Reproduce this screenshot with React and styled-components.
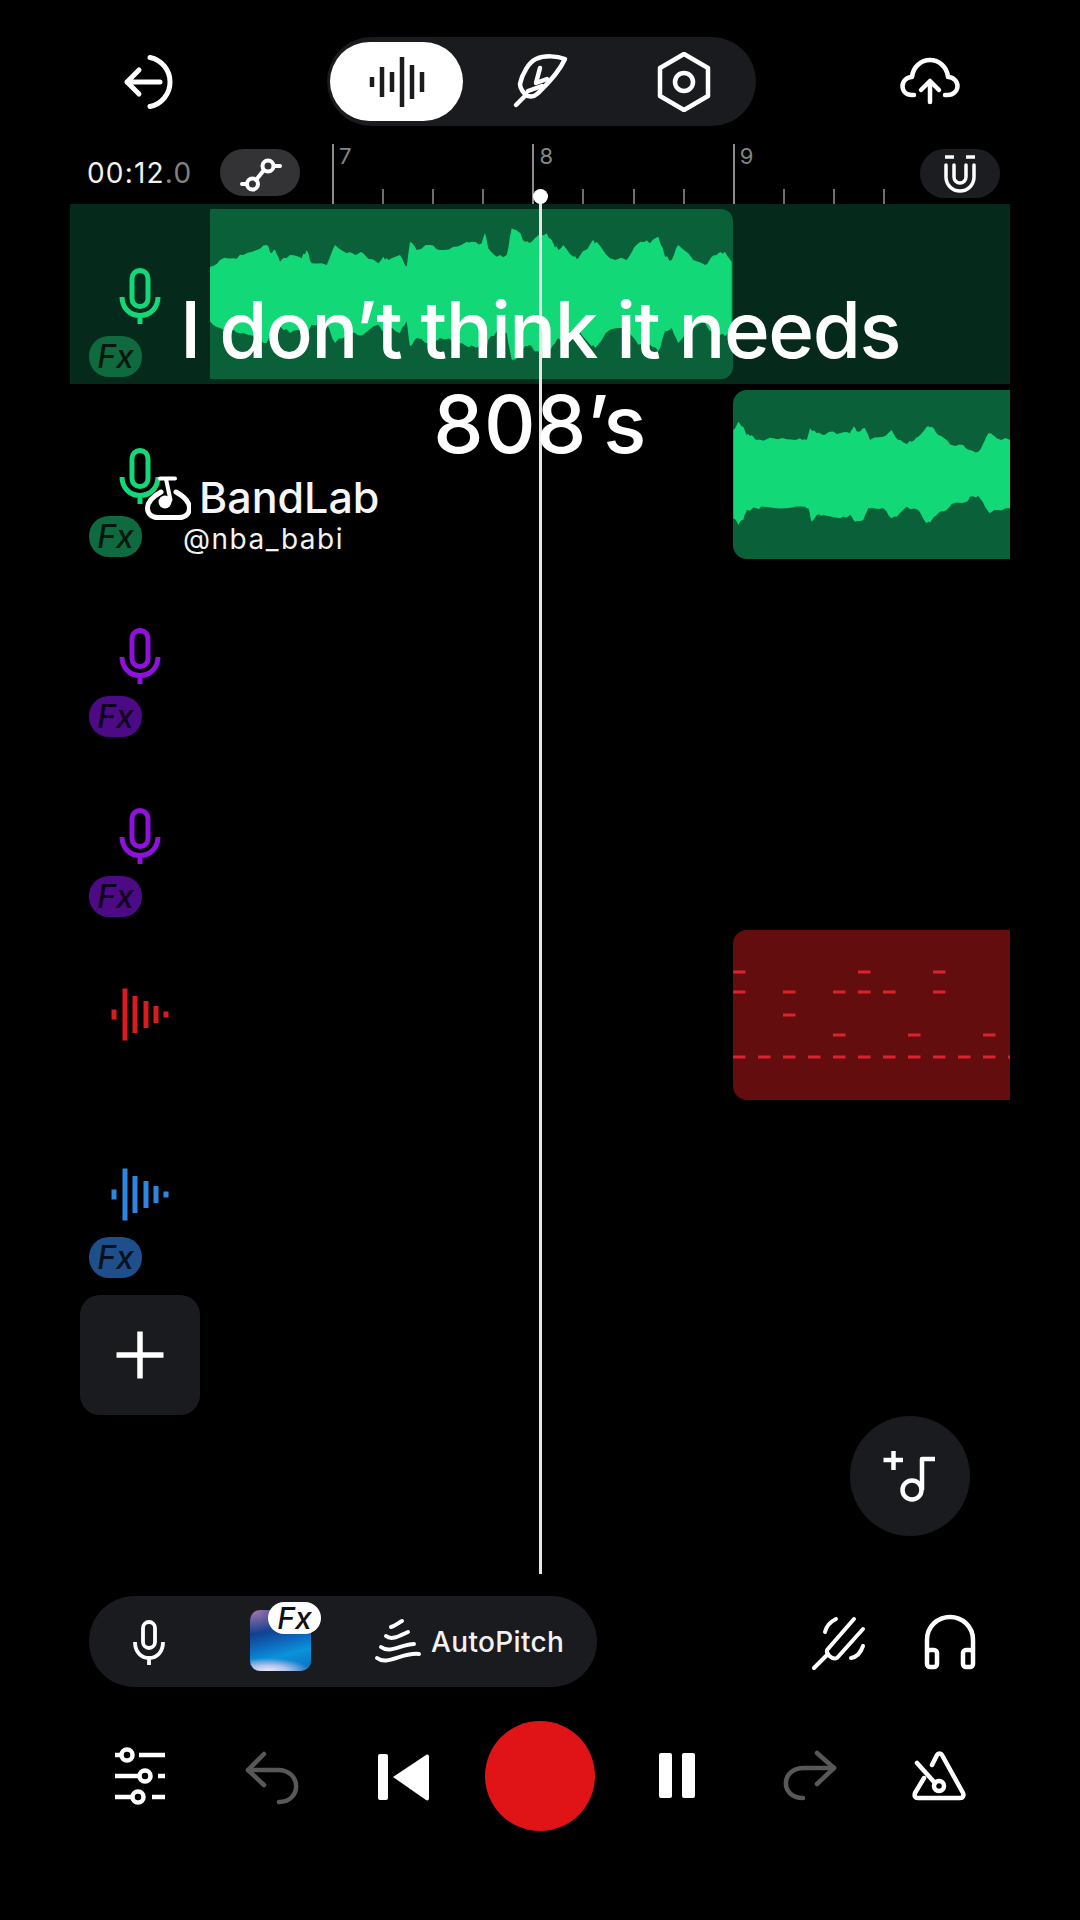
import React from "react";
import styled, { createGlobalStyle } from "styled-components";

const Global = createGlobalStyle`
  html, body { margin: 0; padding: 0; background: #000; }
  * { box-sizing: border-box; }
`;

const UI = `"Inter", "Liberation Sans", sans-serif`;

const Page = styled.div`
  position: relative;
  width: 1080px;
  height: 1920px;
  background: #000;
  overflow: hidden;
  font-family: ${UI};
  color: #fff;
`;

const Glyph = styled.svg`
  display: block;
  flex: none;
  fill: none;
  stroke: ${(p) => p.$color || "#fff"};
  stroke-width: ${(p) => p.$weight || 4.5}px;
  stroke-linecap: round;
  stroke-linejoin: round;
`;

const Icon = ({ box, size = 60, color, weight, children }) => (
  <Glyph
    viewBox={`${box[0]} ${box[1]} ${size} ${size}`}
    width={size}
    height={size}
    $color={color}
    $weight={weight}
  >
    {children}
  </Glyph>
);

/* Header */
const Header = styled.header`
  display: flex;
  align-items: center;
  justify-content: space-between;
  height: 126px;
  padding: 37px 120px 0;
`;
const ModePill = styled.nav`
  display: flex;
  align-items: center;
  width: 429px;
  height: 89px;
  margin-left: 3px;
  padding-left: 3px;
  border-radius: 45px;
  background: #1a1b1f;
`;
const ModeTab = styled.div`
  display: flex;
  align-items: center;
  justify-content: center;
  width: ${(p) => p.$w}px;
  height: 79px;
  border-radius: 40px;
  background: ${(p) => (p.$active ? "#fff" : "transparent")};
`;

/* Time row */
const TimeRow = styled.div`
  display: flex;
  align-items: flex-start;
  height: 60px;
  margin-top: 18px;
  padding-left: 87px;
`;
const TimeText = styled.div`
  width: 133px;
  padding-top: 12px;
  font-size: 28px;
  line-height: 34px;
  letter-spacing: 1.2px;
  color: #f2f2f2;
`;
const TimeFrac = styled.span`
  color: #808080;
`;
const SmallPill = styled.div`
  display: flex;
  align-items: center;
  justify-content: center;
  flex: none;
  width: 80px;
  height: ${(p) => p.$h}px;
  margin-top: 5px;
  border-radius: 25px;
  background: ${(p) => p.$bg};
`;
const Ruler = styled.div`
  display: flex;
  align-items: flex-end;
  width: 588px;
  height: 60px;
  margin-left: 32px;
`;
const Tick = styled.div`
  position: relative;
  flex: 0 0 50.1px;
  height: ${(p) => (p.$major ? 60 : 15)}px;
  border-left: 2px solid ${(p) => (p.$major ? "#8c8c8c" : "#6e6e6e")};
`;
const TickLabel = styled.span`
  position: absolute;
  left: 5px;
  top: -1px;
  font-size: 22px;
  line-height: 26px;
  color: #858585;
`;

/* Tracks */
const Tracks = styled.section`
  margin: 0 70px;
`;
const Track = styled.div`
  display: grid;
  grid-template-columns: 140px 800px;
  height: 180px;
  background: ${(p) => (p.$selected ? "#05291b" : "transparent")};
  overflow: hidden;
`;
const TrackHead = styled.div`
  display: flex;
  flex-direction: column;
  align-items: center;
  height: 180px;
  padding-top: ${(p) => p.$pad}px;
`;
const FxBadge = styled.div`
  align-self: flex-start;
  display: flex;
  align-items: center;
  justify-content: center;
  width: 53px;
  height: 41px;
  margin-top: ${(p) => p.$gap}px;
  margin-left: 19px;
  border-radius: 20px;
  background: ${(p) => p.$bg};
  color: rgba(0, 0, 0, 0.78);
  font-size: 32px;
  font-style: italic;
  font-weight: 500;
  line-height: 1;
`;
const Lane = styled.div`
  display: flex;
  align-items: flex-start;
  padding-top: ${(p) => p.$top}px;
  padding-left: ${(p) => p.$left}px;
`;
const Clip = styled.div`
  flex: none;
  width: ${(p) => p.$w}px;
  height: ${(p) => p.$h}px;
  background: ${(p) => p.$bg};
  border-radius: ${(p) => p.$radius};
  overflow: hidden;
`;
const ClipArt = styled.svg`
  display: block;
  width: 100%;
  height: 100%;
`;

/* Lower area */
const Lower = styled.div`
  display: flex;
  align-items: flex-start;
  justify-content: space-between;
  height: 312px;
  padding: 11px 110px 0 80px;
`;
const AddTrack = styled.div`
  display: flex;
  align-items: center;
  justify-content: center;
  width: 120px;
  height: 120px;
  border-radius: 20px;
  background: #1a1b1e;
`;
const AddNote = styled.div`
  display: flex;
  align-items: center;
  justify-content: center;
  width: 120px;
  height: 120px;
  margin-top: 121px;
  border-radius: 50%;
  background: #1a1b1e;
`;

/* Tool row */
const ToolRow = styled.div`
  display: flex;
  align-items: center;
  height: 91px;
  padding-left: 89px;
`;
const ToolPill = styled.div`
  display: flex;
  align-items: center;
  flex: none;
  width: 508px;
  height: 91px;
  padding-left: 30px;
  border-radius: 46px;
  background: #1a1b1f;
`;
const EffectThumb = styled.div`
  position: relative;
  flex: none;
  width: 61px;
  height: 61px;
  margin-left: 71px;
  margin-top: -3px;
  border-radius: 10px;
  background:
    radial-gradient(42px 13px at 30% 100%, #ece8f8 0%, #b4c2ea 45%, rgba(120, 170, 230, 0) 100%),
    radial-gradient(36px 24px at 6% 0%, #a878b0 0%, #5a5aa0 50%, rgba(30, 60, 130, 0) 100%),
    linear-gradient(165deg, #1d3f8f 0%, #123f8e 32%, #0d6fc4 55%, #0a93d8 70%, #0c6cc4 100%);
`;
const ThumbBadge = styled.div`
  position: absolute;
  left: 18px;
  top: -8px;
  display: flex;
  align-items: center;
  justify-content: center;
  width: 53px;
  height: 32px;
  border-radius: 16px;
  background: #fff;
  color: #111;
  font-size: 30px;
  font-style: italic;
  font-weight: 500;
  line-height: 1;
`;
const PitchLabel = styled.div`
  margin-left: 9px;
  font-size: 28px;
  font-weight: 500;
  line-height: 1;
  color: #f2f2f2;
  letter-spacing: 0.35px;
`;
const RowIcon = styled.div`
  flex: none;
  margin-left: ${(p) => p.$gap}px;
`;
const ThumbGap = styled.div`
  flex: none;
  margin-left: 61px;
`;

/* Transport */
const Transport = styled.footer`
  display: grid;
  grid-template-columns: 132px 132px 132px 140px 134px 130px 130px;
  align-items: center;
  height: 110px;
  margin-top: 34px;
  padding-left: 74px;
`;
const Cell = styled.div`
  display: flex;
  align-items: center;
  justify-content: center;
`;
const RecordButton = styled.div`
  width: 110px;
  height: 110px;
  border-radius: 50%;
  background: #e01417;
`;

/* Overlays */
const Playhead = styled.div`
  position: absolute;
  left: 538.5px;
  top: 196px;
  width: 3px;
  height: 1378px;
  background: #e6e6e6;
  &::before {
    content: "";
    position: absolute;
    left: -6px;
    top: -7px;
    width: 15px;
    height: 15px;
    border-radius: 50%;
    background: #fff;
  }
`;
const Caption = styled.div`
  position: absolute;
  left: 0;
  right: 0;
  top: 283px;
  text-align: center;
  font-weight: 500;
  line-height: 94px;
  color: #fff;
`;
const CaptionLine = styled.div`
  font-size: ${(p) => p.$size}px;
  letter-spacing: ${(p) => p.$track}px;
`;
const Watermark = styled.div`
  position: absolute;
  left: 145px;
  top: 472px;
  display: grid;
  grid-template-columns: 46px auto;
  column-gap: 8px;
  align-items: center;
`;
const BrandName = styled.div`
  font-size: 43px;
  font-weight: 500;
  line-height: 50px;
  color: #f6f6f6;
`;
const Handle = styled.div`
  grid-column: 1 / 3;
  padding-left: 38px;
  padding-top: 2px;
  font-size: 28px;
  line-height: 30px;
  letter-spacing: 1.5px;
  color: #f2f2f2;
`;

/* Data */
const a = (x, y) => [70 + x / 3, 200 + y / 3];
const b = (x, y) => [530 + x / 3, 200 + y / 3];

// fills the hand-read envelope with the fine jitter of a real wave form
const roughen = (list, steps, amp, seed) => {
  const out = [];
  let s = seed;
  const rnd = () => {
    s = (s * 9301 + 49297) % 233280;
    return s / 233280 - 0.5;
  };
  list.forEach((p, i) => {
    const q = list[i + 1];
    out.push(p);
    if (!q) return;
    for (let k = 1; k < steps; k++) {
      const t = k / steps;
      out.push([p[0] + (q[0] - p[0]) * t, p[1] + (q[1] - p[1]) * t + rnd() * amp]);
    }
  });
  return out;
};

const firstEnvelope = [
  [420,200],[450,180],[490,175],[520,165],[560,150],[590,135],[605,160],[615,150],[630,185],[660,165],[695,175],[710,150],[725,190],[770,195],[795,135],[830,160],[855,165],[880,160],[925,190],[940,170],[955,180],[990,165],[1010,200],[1020,125],[1040,150],[1080,135],[1110,150],[1150,140],[1190,125],[1210,125],[1235,130],[1245,100],[1255,145],[1280,170],[1310,165],[1325,85],[1345,95],[1365,125],[1385,125],
].map(([x, y]) => a(x, y)).concat(
  [[20,110],[50,100],[70,130],[85,150],[100,135],[130,170],[145,175],[185,125],[200,125],[240,175],[290,180],[325,130],[345,125],[360,130],[385,110],[405,170],[425,180],[445,135],[490,180],[525,195],[545,170],[565,160],[585,155],[605,185]].map(([x, y]) => b(x, y))
);
const firstTop = roughen(firstEnvelope, 3, 4, 17);
const firstBottom = roughen(firstEnvelope.map(([x, y]) => [x, 588 - y]), 3, 4, 91).reverse();
const secondTop = roughen([
  [610,690],[625,665],[640,680],[650,705],[665,705],[680,720],[700,722],[730,715],[770,718],[810,715],[830,720],[840,685],[860,700],[880,705],[900,695],[930,700],[960,700],[970,680],[985,695],[1005,685],[1020,720],[1060,710],[1085,690],[1105,720],[1125,730],[1145,725],[1165,710],[1190,680],[1205,680],[1225,705],[1250,720],[1265,735],[1300,735],[1320,750],[1345,755],[1365,720],[1375,700],[1400,715],[1440,720],
].map(([x, y]) => b(x, y)), 3, 3, 43);
const secondBottom = roughen([
  [610,955],[625,975],[640,960],[650,930],[680,925],[700,920],[770,925],[820,920],[835,925],[845,965],[860,945],[880,945],[930,955],[960,945],[975,965],[1000,960],[1015,925],[1060,925],[1085,955],[1100,950],[1130,920],[1165,930],[1190,970],[1205,960],[1225,940],[1250,930],[1265,912],[1310,905],[1320,890],[1345,888],[1365,920],[1380,940],[1400,930],[1440,925],
].map(([x, y]) => b(x, y)), 3, 3, 71).reverse();
const toPoints = (l) => l.map((p) => p.map((n) => n.toFixed(1)).join(",")).join(" ");

const notes = [
  [42, [0, 5, 8]],
  [62, [0, 2, 4, 5, 6, 8]],
  [85, [2]],
  [105, [4, 7, 10]],
  [127, [0, 1, 2, 3, 4, 5, 6, 7, 8, 9, 10, 11]],
];

const WAVE_BARS = [[114, 10], [125, 52], [135, 37], [146, 27], [156, 17], [166, 6]];
const MODE_BARS = [[372, 10], [382, 30], [392, 20], [402, 50], [412, 34], [422, 20]];

const ticks = [7, 0, 0, 0, 8, 0, 0, 0, 9, 0, 0, 0];

/* Icons */
const BackIcon = () => (
  <Icon box={[120, 51]} weight={5}>
    <path d="M160 81H127M139 69L127 81L139 93" />
    <path d="M150 56.500A25 25 0 0 1 150 105.500" />
  </Icon>
);
const ModeWaveIcon = () => (
  <Icon box={[367, 51]} color="#1b1b1d" weight={4.5}>
    {MODE_BARS.map(([x, h]) => (
      <line key={x} x1={x} x2={x} y1={81 - h / 2} y2={81 + h / 2} strokeLinecap="butt" />
    ))}
  </Icon>
);
const FeatherIcon = () => (
  <Icon box={[510, 51]} weight={4.5}>
    <path d="M565 58C557 55 545 54 536 58C529 61 522 73 520 83C520 88 524 93 528 95C532 96 535 95 537 93C544 86 557 75 565 58Z" />
    <path d="M516 104L526 94M540 67L536 82L547 78M528 90L542 85" />
  </Icon>
);
const HexIcon = () => (
  <Icon box={[654, 51]}>
    <path d="M684 53L708 67V95L684 109L660 95V67Z" />
    <circle cx="684" cy="81" r="9" />
  </Icon>
);
const CloudIcon = () => (
  <Icon box={[900, 51]}>
    <path d="M914 94H912C906 94 902.500 90 902.500 85C902.500 80 907 76 912 76C913 66 921 59 930 59C939 59 947 66 948 76C953 76 957.500 80 957.500 85C957.500 90 953 94 948 94H945" />
    <path d="M930 101V81M921 89L930 80L939 89" />
  </Icon>
);
const AutomationIcon = () => (
  <Icon box={[230, 142]} weight={4}>
    <circle cx="252.500" cy="183" r="5.500" />
    <circle cx="268" cy="165" r="5.500" />
    <path d="M242 183H247M256 179L264 169M274 165H280" />
  </Icon>
);
const MagnetIcon = () => (
  <Icon box={[931, 145]} weight={3.5}>
    <path d="M947 166V178A14 14 0 0 0 975 178V166" />
    <path d="M955 166V178A6 6 0 0 0 967 178V166" />
    <path d="M946 158H955M967 158H976" strokeLinecap="butt" />
  </Icon>
);
const MicBox = styled.div`
  width: 44px;
  height: 60px;
`;
const TrackMic = ({ color }) => (
  <MicBox>
    <Glyph viewBox="118 264 44 60" width="44" height="60" $color={color} $weight={5}>
      <rect x="132" y="268.500" width="16" height="36" rx="8" />
      <path d="M122 295C122 306 130 313.500 140 313.500C150 313.500 158 306 158 295M140 313.500V322" strokeLinecap="butt" />
    </Glyph>
  </MicBox>
);
const TrackWave = ({ color }) => (
  <Glyph viewBox="110 988 60 54" width="60" height="54" $color={color} $weight={5}>
    {WAVE_BARS.map(([x, h]) => (
      <line key={x} x1={x} x2={x} y1={1014.5 - h / 2} y2={1014.5 + h / 2} strokeLinecap="butt" />
    ))}
  </Glyph>
);
const PlusIcon = () => (
  <Icon box={[110, 1325]} weight={5.5}>
    <path d="M116.500 1355H163.500M140 1331.500V1378.500" strokeLinecap="butt" />
  </Icon>
);
const AddNoteIcon = () => (
  <Icon box={[880, 1446]}>
    <path d="M883.500 1460H903M893.500 1451V1470" strokeLinecap="butt" />
    <circle cx="912" cy="1490" r="9.500" />
    <path d="M922 1490V1459H935" strokeLinecap="butt" />
  </Icon>
);
const ToolMic = () => (
  <Glyph viewBox="119 1611 60 60" width="60" height="60" $weight={3.8}>
    <rect x="143" y="1621" width="12" height="26" rx="6" />
    <path d="M135 1641C135 1651 141 1657 149 1657C157 1657 163 1651 163 1641M149 1657V1664" strokeLinecap="butt" />
  </Glyph>
);
const PitchIcon = () => (
  <Glyph viewBox="370 1612 50 56" width="50" height="56" $weight={4}>
    <path d="M389 1625C393 1624 396 1621 400 1619" />
    <path d="M384 1634C390 1639 399 1633 406 1630" />
    <path d="M379 1645C388 1652 400 1642 412 1642" />
    <path d="M375 1656C385 1664 400 1650 417 1652" />
  </Glyph>
);
const ForkIcon = () => (
  <Icon box={[810, 1610]} weight={4}>
    <path d="M814 1666L828 1652" />
    <path d="M854 1617L827 1648C826 1652 832 1658 837 1656L863 1627" />
    <path d="M825 1630C826 1625 830 1620 836 1617M851 1656C857 1655 861 1650 863 1644" />
  </Icon>
);
const HeadphoneIcon = () => (
  <Icon box={[920, 1610]}>
    <path d="M927 1650V1638C927 1624 938 1615 950 1615C962 1615 973 1624 973 1638V1650" />
    <rect x="927" y="1648" width="10" height="17" rx="3" />
    <rect x="963" y="1648" width="10" height="17" rx="3" />
  </Icon>
);
const SlidersIcon = () => (
  <Icon box={[110, 1747]}>
    <path d="M115 1756H120M139 1756H165M115 1777H138M158 1777H165M115 1798H131M152 1798H165" strokeLinecap="butt" />
    <circle cx="127" cy="1756" r="5.500" />
    <circle cx="145" cy="1777" r="5.500" />
    <circle cx="138" cy="1798" r="5.500" />
  </Icon>
);
const UndoIcon = () => (
  <Icon box={[242, 1747]} color="#585858">
    <path d="M264 1755L248 1771L264 1786" />
    <path d="M248 1771H278C302 1771 302 1803 279 1803" />
  </Icon>
);
const RedoIcon = () => (
  <Icon box={[779, 1747]} color="#585858">
    <path d="M817 1754L834 1769L817 1785" />
    <path d="M834 1769H804C780 1769 780 1799 803 1799" />
  </Icon>
);
const PrevIcon = () => (
  <Glyph viewBox="374 1746 60 60" width="60" height="60" style={{ stroke: "none" }}>
    <rect x="378" y="1754" width="10" height="46" rx="2" fill="#fff" />
    <path d="M393 1777L426 1755C428 1754 429 1755 429 1757V1798C429 1800 428 1801 426 1800Z" fill="#fff" />
  </Glyph>
);
const PauseIcon = () => (
  <Glyph viewBox="647 1746 60 60" width="60" height="60" style={{ stroke: "none" }}>
    <rect x="659" y="1753" width="13" height="45" rx="2" fill="#fff" />
    <rect x="682" y="1753" width="13" height="45" rx="2" fill="#fff" />
  </Glyph>
);
const MetronomeIcon = () => (
  <Icon box={[910, 1746]} weight={4.5}>
    <path d="M933 1765L938 1755C939 1753 942 1753 943 1755L964 1793C965 1796 964 1798 961 1798H919C916 1798 915 1796 916 1793L925 1778" />
    <path d="M918 1763L936 1783" />
    <circle cx="940" cy="1786" r="5" />
  </Icon>
);
const LogoIcon = () => (
  <Glyph viewBox="145 472 46 46" width="46" height="46" $weight={5}>
    <path d="M161 490C152 495 147.500 500 147.500 506C147.500 512 152 515.500 158 515.500H179C185 515.500 189.500 512 189.500 506C189.500 500 185 495 176 490" />
    <path d="M160 476.500H175M166 477L170.500 498" strokeWidth="4" />
    <circle cx="165" cy="500" r="6.500" fill="#fff" stroke="none" />
  </Glyph>
);

const tracks = [
  { id: 1, color: "#14d878", fx: "#0f6a40", selected: true },
  { id: 2, color: "#14d878", fx: "#0f6a40" },
  { id: 3, color: "#8f12dc", fx: "#4d0a85" },
  { id: 4, color: "#8f12dc", fx: "#4d0a85" },
  { id: 5, color: "#d91c1f", wave: true },
  { id: 6, color: "#2e86e0", fx: "#1f4f8a", wave: true },
];

const ClipContent = ({ id }) => {
  if (id === 1)
    return (
      <Clip $w={523} $h={170} $bg="#0a6038" $radius="0 12px 12px 0">
        <ClipArt viewBox="210 209 523 170">
          <polygon points={toPoints([...firstTop, ...firstBottom])} fill="#13d877" />
        </ClipArt>
      </Clip>
    );
  if (id === 2)
    return (
      <Clip $w={277} $h={169} $bg="#0a6038" $radius="14px 0 0 14px">
        <ClipArt viewBox="733 390 277 169">
          <polygon points={toPoints([...secondTop, ...secondBottom])} fill="#13d877" />
        </ClipArt>
      </Clip>
    );
  if (id === 5)
    return (
      <Clip $w={277} $h={170} $bg="#640d0f" $radius="14px 0 0 14px">
        <ClipArt viewBox="0 0 277 170">
          {notes.flatMap(([y, cols]) =>
            cols.map((c) => (
              <rect key={`${y}-${c}`} x={c * 25} y={y - 1.5} width="12.5" height="3" fill="#d8252c" />
            ))
          )}
        </ClipArt>
      </Clip>
    );
  return null;
};

const laneProps = {
  1: { $top: 5, $left: 0 },
  2: { $top: 6, $left: 523 },
  5: { $top: 6, $left: 523 },
};

export default function App() {
  return (
    <Page>
      <Global />
      <Header>
        <BackIcon />
        <ModePill>
          <ModeTab $w={133} $active><ModeWaveIcon /></ModeTab>
          <ModeTab $w={154}><FeatherIcon /></ModeTab>
          <ModeTab $w={134}><HexIcon /></ModeTab>
        </ModePill>
        <CloudIcon />
      </Header>

      <TimeRow>
        <TimeText>00:12<TimeFrac>.0</TimeFrac></TimeText>
        <SmallPill $h={47} $bg="#333335"><AutomationIcon /></SmallPill>
        <Ruler>
          {ticks.map((t, i) => (
            <Tick key={i} $major={t > 0}>
              {t > 0 && <TickLabel>{t}</TickLabel>}
            </Tick>
          ))}
        </Ruler>
        <SmallPill $h={49} $bg="#1c1d20"><MagnetIcon /></SmallPill>
      </TimeRow>

      <Tracks>
        {tracks.map((t) => (
          <Track key={t.id} $selected={t.selected}>
            <TrackHead $pad={t.wave ? 64 : 62}>
              {t.wave ? <TrackWave color={t.color} /> : <TrackMic color={t.color} />}
              {t.fx && <FxBadge $bg={t.fx} $gap={t.wave ? 15 : 10}>Fx</FxBadge>}
            </TrackHead>
            <Lane {...(laneProps[t.id] || { $top: 0, $left: 0 })}>
              <ClipContent id={t.id} />
            </Lane>
          </Track>
        ))}
      </Tracks>

      <Lower>
        <AddTrack><PlusIcon /></AddTrack>
        <AddNote><AddNoteIcon /></AddNote>
      </Lower>

      <ToolRow>
        <ToolPill>
          <ToolMic />
          <EffectThumb><ThumbBadge>Fx</ThumbBadge></EffectThumb>
          <ThumbGap><PitchIcon /></ThumbGap>
          <PitchLabel>AutoPitch</PitchLabel>
        </ToolPill>
        <RowIcon $gap={213}><ForkIcon /></RowIcon>
        <RowIcon $gap={50}><HeadphoneIcon /></RowIcon>
      </ToolRow>

      <Transport>
        <Cell><SlidersIcon /></Cell>
        <Cell><UndoIcon /></Cell>
        <Cell><PrevIcon /></Cell>
        <Cell><RecordButton /></Cell>
        <Cell><PauseIcon /></Cell>
        <Cell><RedoIcon /></Cell>
        <Cell><MetronomeIcon /></Cell>
      </Transport>

      <Playhead />
      <Caption>
        <CaptionLine $size={78} $track={-1.5}>I don’t think it needs</CaptionLine>
        <CaptionLine $size={80} $track={0.4}>808’s</CaptionLine>
      </Caption>
      <Watermark>
        <LogoIcon />
        <BrandName>BandLab</BrandName>
        <Handle>@nba_babi</Handle>
      </Watermark>
    </Page>
  );
}
